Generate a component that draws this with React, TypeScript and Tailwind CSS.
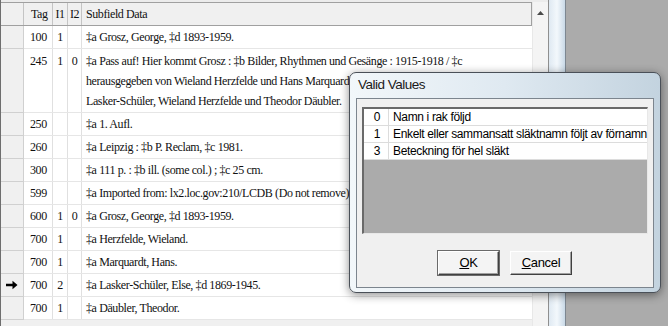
import React from "react";

type Row = { tag: string; i1: string; i2: string; lines: string[]; arrow?: boolean };

const rows: Row[] = [
  { tag: "100", i1: "1", i2: "", lines: ["‡a Grosz, George, ‡d 1893-1959."] },
  {
    tag: "245",
    i1: "1",
    i2: "0",
    lines: [
      "‡a Pass auf! Hier kommt Grosz : ‡b Bilder, Rhythmen und Gesänge : 1915-1918 / ‡c",
      "herausgegeben von Wieland Herzfelde und Hans Marquardt",
      "Lasker-Schüler, Wieland Herzfelde und Theodor Däubler.",
    ],
  },
  { tag: "250", i1: "", i2: "", lines: ["‡a 1. Aufl."] },
  { tag: "260", i1: "", i2: "", lines: ["‡a Leipzig : ‡b P. Reclam, ‡c 1981."] },
  { tag: "300", i1: "", i2: "", lines: ["‡a 111 p. : ‡b ill. (some col.) ; ‡c 25 cm."] },
  { tag: "599", i1: "", i2: "", lines: ["‡a Imported from: lx2.loc.gov:210/LCDB (Do not remove)"] },
  { tag: "600", i1: "1", i2: "0", lines: ["‡a Grosz, George, ‡d 1893-1959."] },
  { tag: "700", i1: "1", i2: "", lines: ["‡a Herzfelde, Wieland."] },
  { tag: "700", i1: "1", i2: "", lines: ["‡a Marquardt, Hans."] },
  { tag: "700", i1: "2", i2: "", lines: ["‡a Lasker-Schüler, Else, ‡d 1869-1945."], arrow: true },
  { tag: "700", i1: "1", i2: "", lines: ["‡a Däubler, Theodor."] },
];

const values = [
  { v: "0", t: "Namn i rak följd" },
  { v: "1", t: "Enkelt eller sammansatt släktnamn följt av förnamn" },
  { v: "3", t: "Beteckning för hel släkt" },
];

const serif = { fontFamily: '"Liberation Serif", "Times New Roman", serif' };
const sans = { fontFamily: '"Liberation Sans", Arial, sans-serif' };

function Arrow() {
  return (
    <svg width="12" height="10" viewBox="0 0 12 10">
      <path d="M0 3.8 H6.5 V0.8 L11.5 5 L6.5 9.2 V6.2 H0 Z" fill="#000" />
    </svg>
  );
}

export default function App() {
  return (
    <div className="relative w-[668px] h-[326px] overflow-hidden bg-[#ababab] flex text-black">
      {/* Main grid window */}
      <div className="w-[548px] h-full flex flex-col bg-[#f0f0f0] border-l border-[#6e6e6e]">
        <div className="h-[2px] bg-[#ececec]" />
        <div className="flex-1 flex">
          {/* grid */}
          <div className="w-[531px] flex flex-col text-[12px] tracking-[-0.4px] text-[#111]" style={serif}>
            {/* header */}
            <div className="flex h-[24px] border-t border-b border-[#a0a0a0] bg-[#f0f0f0]">
              <div className="w-[23px] border-r border-[#c4c4c4]" />
              <div className="w-[29px] border-r border-[#c4c4c4] pl-[7px] flex items-center">Tag</div>
              <div className="w-[15px] border-r border-[#c4c4c4] flex items-center justify-center">I1</div>
              <div className="w-[14px] border-r border-[#c4c4c4] flex items-center justify-center">I2</div>
              <div className="flex-1 pl-[4px] flex items-center border-r border-[#a0a0a0]">Subfield Data</div>
            </div>
            {rows.map((r, idx) => (
              <div
                key={idx}
                className={
                  "flex border-b border-[#e6e6e6] bg-white " +
                  (r.lines.length > 1 ? "h-[64px]" : "h-[23px]")
                }
              >
                <div className="w-[23px] -mb-px border-r border-b border-[#d0d0d0] bg-[#f0f0f0] flex items-center justify-center">
                  {r.arrow ? <Arrow /> : null}
                </div>
                <div className="w-[29px] border-r border-[#e0e0e0] pl-[6px] leading-[20px] py-[1px] flex flex-col justify-start">
                  <span className={r.lines.length > 1 ? "mt-[1px]" : "mt-0"}>{r.tag}</span>
                </div>
                <div className="w-[15px] border-r border-[#e0e0e0] text-center leading-[20px] py-[1px]">
                  <span className={r.lines.length > 1 ? "block mt-[1px]" : "block"}>{r.i1}</span>
                </div>
                <div className="w-[14px] border-r border-[#e0e0e0] text-center leading-[20px] py-[1px]">
                  <span className={r.lines.length > 1 ? "block mt-[1px]" : "block"}>{r.i2}</span>
                </div>
                <div className="flex-1 pl-[4px] leading-[20px] py-[1px] whitespace-nowrap overflow-hidden">
                  {r.lines.map((l, i) => (
                    <div key={i} className={r.lines.length > 1 && i === 0 ? "mt-[1px]" : ""}>
                      {l}
                    </div>
                  ))}
                </div>
              </div>
            ))}
            <div className="flex-1 bg-[#f0f0f0]" />
          </div>
          {/* scrollbar */}
          <div className="w-[16px] bg-[#f4f4f4] border-l border-[#e8e8e8] flex flex-col items-center pt-[9px]">
            <svg width="7" height="4" viewBox="0 0 7 4">
              <path d="M0 4 L3.5 0 L7 4 Z" fill="#4a4a4a" />
            </svg>
          </div>
        </div>
      </div>
      {/* main window frame */}
      <div className="w-[18px] h-full border-l border-[#8f8f8f] border-r border-r-[#7d8791] bg-gradient-to-r from-[#dfe9f2] via-[#f3f8fc] to-[#c9d9e7]" />
      <div className="flex-1" />

      {/* Dialog */}
      <div className="absolute left-[349px] top-[72px] w-[312px] h-[221px] rounded-[7px] border border-[#4a5058] shadow-[0_2px_10px_rgba(0,0,0,0.45)] bg-gradient-to-r from-[#f2f7fa] via-[#dfe9f1] to-[#c3d3df] flex flex-col px-[6px] pb-[4px]">
        <div className="h-[25px] flex items-center pl-[2px] text-[13.5px] tracking-[-0.5px] text-[#1a1a1a]" style={sans}>
          Valid Values
        </div>
        <div className="flex-1 border border-[#7c858e] bg-[#f0f0f0] flex flex-col px-[5px] pt-[8px]">
          {/* list */}
          <div className="h-[127px] border-t-2 border-l-2 border-t-[#6a6a6a] border-l-[#6a6a6a] border-r border-b border-r-[#e8e8e8] border-b-[#e8e8e8] bg-[#ababab] flex flex-col">
            {values.map((v) => (
              <div key={v.v} className="h-[17px] flex bg-white border-b border-[#dcdcdc] text-[12px] tracking-[-0.35px]" style={sans}>
                <div className="w-[25px] border-r border-[#dcdcdc] flex items-center justify-end pr-[8px]">{v.v}</div>
                <div className="flex-1 flex items-center pl-[4px] whitespace-nowrap">{v.t}</div>
              </div>
            ))}
          </div>
          {/* buttons */}
          <div className="flex gap-[11px] pl-[76px] pt-[17px] text-[13px] tracking-[-0.3px]" style={sans}>
            <button className="w-[61px] h-[24px] bg-[#f4f4f4] border border-t-white border-l-white border-r-[#404040] border-b-[#404040] shadow-[inset_-1px_-1px_0_#a0a0a0,0_0_0_1px_#6a6a6a] flex items-center justify-center">
              <span><span className="underline">O</span>K</span>
            </button>
            <button className="w-[62px] h-[24px] bg-[#f4f4f4] border border-t-white border-l-white border-r-[#404040] border-b-[#404040] shadow-[inset_-1px_-1px_0_#a0a0a0] flex items-center justify-center">
              <span><span className="underline">C</span>ancel</span>
            </button>
          </div>
        </div>
      </div>
    </div>
  );
}
